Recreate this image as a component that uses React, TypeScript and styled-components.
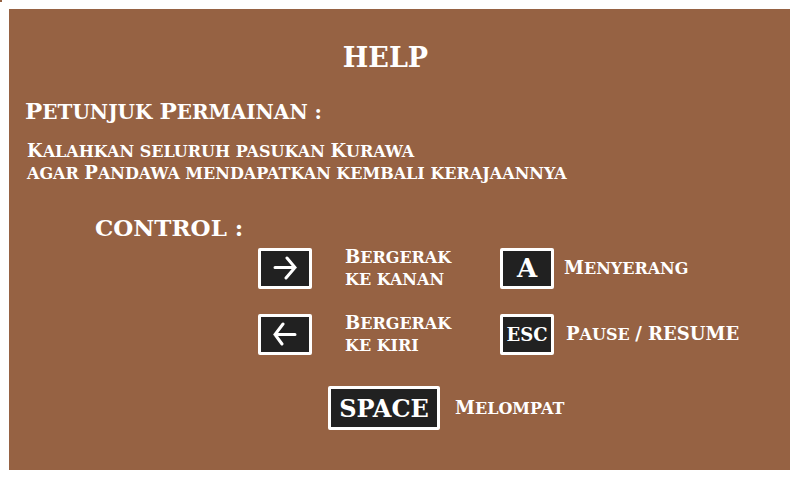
import React from "react";
import styled, { createGlobalStyle } from "styled-components";

const brown = "#966243";
const ink = "#212121";

const GlobalStyle = createGlobalStyle`
  *, *::before, *::after { box-sizing: border-box; }
  body {
    margin: 0;
    color: #fff;
    background: linear-gradient(${brown}, ${brown}) 0 0 / 2px 2px no-repeat #fff;
    font-family: "DejaVu Serif", serif;
    font-weight: 700;
  }
`;

const Page = styled.div`
  display: flex;
  min-height: 100vh;
  padding: 9px 10px 10px 9px;
`;

const Panel = styled.main`
  flex: 1;
  padding: 33px 16px;
  background: ${brown};
`;

const Title = styled.h1`
  margin: 0;
  padding-right: 28px;
  font-size: 27px;
  line-height: 32px;
  text-align: center;
`;

const Heading = styled.h2`
  margin: 24px 0 0;
  font-size: 20px;
  line-height: 28px;
  text-transform: uppercase;
`;

const Initial = styled.span<{ $large?: boolean }>`
  font-size: ${(p) => (p.$large ? "23px" : "18px")};
  line-height: 1;
`;

const Story = styled.p`
  margin: 15px 0 0 2px;
  font-size: 16px;
  line-height: 22px;
  text-transform: uppercase;
`;

const ControlHeading = styled.h2`
  margin: 29px 0 0 70px;
  font-size: 23px;
  line-height: 28px;
`;

const Controls = styled.div`
  display: grid;
  grid-template-columns: 242px 1fr;
  row-gap: 22px;
  margin: 4px 0 0 233px;
`;

const Control = styled.div<{ $gap: number }>`
  display: flex;
  align-items: center;
  gap: ${(p) => p.$gap}px;
  height: 44px;
`;

const WideControl = styled(Control)`
  grid-column: 1 / -1;
  margin: 8px 0 0 70px;
`;

const Key = styled.kbd<{ $size: number; $wide?: boolean }>`
  display: flex;
  flex: none;
  align-items: center;
  justify-content: center;
  width: ${(p) => (p.$wide ? 112 : 54)}px;
  height: ${(p) => (p.$wide ? 44 : 41)}px;
  border: 3px solid #fff;
  border-radius: 2px;
  background: ${ink};
  font-family: inherit;
  font-size: ${(p) => p.$size}px;
`;

const Label = styled.span`
  padding-top: 2px;
  font-size: 16px;
  line-height: 22px;
  text-transform: uppercase;
  white-space: nowrap;
`;

const ArrowIcon = styled.svg`
  width: 24px;
  height: 24px;
  fill: none;
  stroke: #fff;
  stroke-width: 3;
  stroke-linecap: round;
`;

export default function App() {
  return (
    <>
      <GlobalStyle />
      <Page>
        <Panel>
          <Title>HELP</Title>
          <Heading>
            <Initial $large>P</Initial>etunjuk <Initial $large>P</Initial>ermainan :
          </Heading>
          <Story>
            <Initial>K</Initial>alahkan seluruh pasukan <Initial>K</Initial>urawa
            <br />
            agar <Initial>P</Initial>andawa mendapatkan kembali kerajaannya
          </Story>
          <ControlHeading>CONTROL :</ControlHeading>
          <Controls>
            <Control $gap={33}>
              <Key $size={18} aria-label="Right arrow">
                <ArrowIcon viewBox="0 0 24 24" aria-hidden="true">
                  <path d="M2 11.5H22M14 2L22 11.5L13 22" />
                </ArrowIcon>
              </Key>
              <Label>
                <Initial>B</Initial>ergerak
                <br />
                ke kanan
              </Label>
            </Control>
            <Control $gap={10}>
              <Key $size={26}>A</Key>
              <Label>
                <Initial>M</Initial>enyerang
              </Label>
            </Control>
            <Control $gap={33}>
              <Key $size={18} aria-label="Left arrow">
                <ArrowIcon viewBox="0 0 24 24" aria-hidden="true">
                  <path d="M22 12.5H2M10 2L2 12.5L9 22" />
                </ArrowIcon>
              </Key>
              <Label>
                <Initial>B</Initial>ergerak
                <br />
                ke kiri
              </Label>
            </Control>
            <Control $gap={12}>
              <Key $size={18}>ESC</Key>
              <Label>
                <Initial>P</Initial>ause <Initial>/ resume</Initial>
              </Label>
            </Control>
            <WideControl $gap={15}>
              <Key $size={24} $wide>
                SPACE
              </Key>
              <Label>
                <Initial>M</Initial>elompat
              </Label>
            </WideControl>
          </Controls>
        </Panel>
      </Page>
    </>
  );
}
